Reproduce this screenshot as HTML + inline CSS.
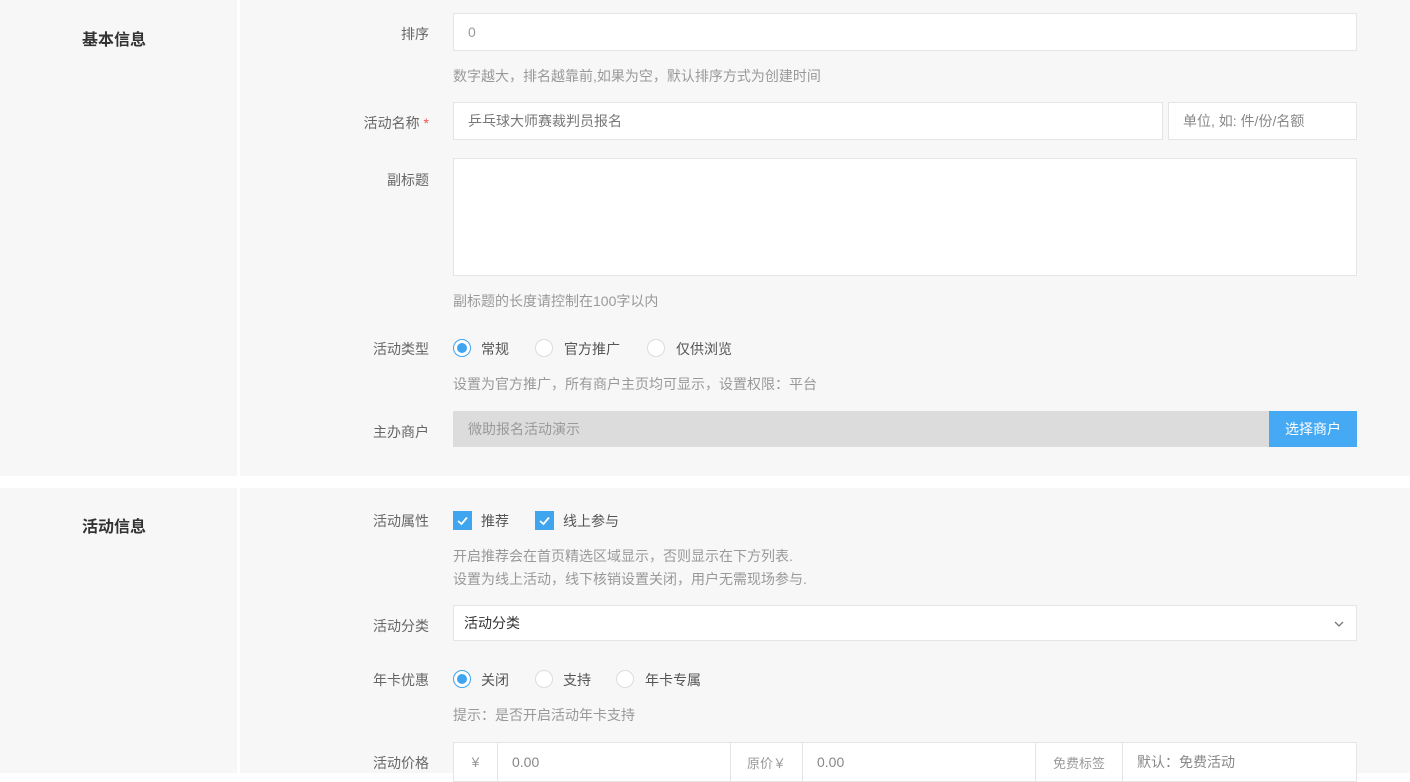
<!DOCTYPE html>
<html><head><meta charset="utf-8"><style>
*{box-sizing:border-box;margin:0;padding:0}
body{width:1410px;height:773px;background:#fff;font-family:"Liberation Sans","Noto Sans CJK SC",sans-serif;font-size:14px;color:#666;position:relative;overflow:hidden}
.sec{position:absolute;left:0;width:1410px;background:#f7f7f7}
.left{position:absolute;left:0;top:0;bottom:0;width:240px;border-right:3px solid #fff}
.title{position:absolute;left:82px;font-size:16px;font-weight:bold;color:#333}
.a{position:absolute;white-space:nowrap}
.lbl{position:absolute;right:981px;text-align:right;white-space:nowrap;color:#666}
.inp{position:absolute;background:#fff;border:1px solid #e5e5e5;color:#555;padding-left:14px;display:flex;align-items:center;font-size:14px}
.help{position:absolute;left:453px;color:#999;white-space:nowrap}
.radio{position:absolute;width:18px;height:18px;border-radius:50%;border:1px solid #ddd;background:#fff}
.radio.on{border:1px solid #3fa5ef}
.radio.on::after{content:"";position:absolute;left:3px;top:3px;width:10px;height:10px;border-radius:50%;background:#3fa5ef}
.cb{position:absolute;width:19px;height:19px;background:#3fa5ef}
.seg{position:absolute;top:0;height:100%;display:flex;align-items:center;border-right:1px solid #e5e5e5}
</style></head><body>
<div class="sec" style="top:0;height:476px">
 <div class="left"></div>
 <div class="title" style="top:26px">基本信息</div>
 <div class="lbl" style="top:24px">排序</div>
 <div class="inp" style="left:453px;top:13px;width:904px;height:38px;color:#999">0</div>
 <div class="help" style="top:66px">数字越大，排名越靠前,如果为空，默认排序方式为创建时间</div>
 <div class="lbl" style="top:113px">活动名称 <span style="color:#e55">*</span></div>
 <div style="position:absolute;left:429px"></div>
 <div class="inp" style="left:453px;top:102px;width:710px;height:38px;color:#777">乒乓球大师赛裁判员报名</div>
 <div class="inp" style="left:1168px;top:102px;width:189px;height:38px;color:#888">单位, 如: 件/份/名额</div>
 <div class="lbl" style="top:170px">副标题</div>
 <div class="inp" style="left:453px;top:158px;width:904px;height:118px"></div>
 <div class="help" style="top:291px">副标题的长度请控制在100字以内</div>
 <div class="lbl" style="top:339px">活动类型</div>
 <div class="radio on" style="left:453px;top:339px"></div><div class="a" style="left:481px;top:339px;color:#555">常规</div>
 <div class="radio" style="left:535px;top:339px"></div><div class="a" style="left:564px;top:339px;color:#555">官方推广</div>
 <div class="radio" style="left:647px;top:339px"></div><div class="a" style="left:676px;top:339px;color:#555">仅供浏览</div>
 <div class="help" style="top:374px">设置为官方推广，所有商户主页均可显示，设置权限：平台</div>
 <div class="lbl" style="top:422px">主办商户</div>
 <div class="inp" style="left:453px;top:411px;width:817px;height:36px;background:#dcdcdc;border-color:#dcdcdc;color:#999">微助报名活动演示</div>
 <div class="a" style="left:1269px;top:411px;width:88px;height:36px;background:#45a9f3;color:#fff;display:flex;align-items:center;justify-content:center">选择商户</div>
</div>
<div class="sec" style="top:488px;height:285px">
 <div class="left"></div>
 <div class="title" style="top:25px">活动信息</div>
 <div class="lbl" style="top:23px">活动属性</div>
 <div class="cb" style="left:453px;top:23px"><svg width="19" height="19"><path d="M5 10 L8.5 13 L14 6.5" stroke="#fff" stroke-width="1.8" fill="none"/></svg></div>
 <div class="a" style="left:481px;top:23px;color:#555">推荐</div>
 <div class="cb" style="left:535px;top:23px"><svg width="19" height="19"><path d="M5 10 L8.5 13 L14 6.5" stroke="#fff" stroke-width="1.8" fill="none"/></svg></div>
 <div class="a" style="left:563px;top:23px;color:#555">线上参与</div>
 <div class="help" style="top:58px">开启推荐会在首页精选区域显示，否则显示在下方列表.</div>
 <div class="help" style="top:81px">设置为线上活动，线下核销设置关闭，用户无需现场参与.</div>
 <div class="lbl" style="top:128px">活动分类</div>
 <div class="inp" style="left:453px;top:117px;width:904px;height:36px;padding-left:10px;color:#333">活动分类<svg style="position:absolute;right:12px;top:14px" width="10" height="8"><path d="M1 2 L5 6 L9 2" stroke="#777" stroke-width="1.3" fill="none"/></svg></div>
 <div class="lbl" style="top:182px">年卡优惠</div>
 <div class="radio on" style="left:453px;top:182px"></div><div class="a" style="left:481px;top:182px;color:#555">关闭</div>
 <div class="radio" style="left:535px;top:182px"></div><div class="a" style="left:563px;top:182px;color:#555">支持</div>
 <div class="radio" style="left:616px;top:182px"></div><div class="a" style="left:645px;top:182px;color:#555">年卡专属</div>
 <div class="help" style="top:217px">提示：是否开启活动年卡支持</div>
 <div class="lbl" style="top:265px">活动价格</div>
 <div class="a" style="left:453px;top:254px;width:904px;height:40px;background:#fff;border:1px solid #e5e5e5">
  <div class="seg" style="left:0;width:44px;justify-content:center;color:#999">¥</div>
  <div class="seg" style="left:44px;width:233px;padding-left:14px;color:#888">0.00</div>
  <div class="seg" style="left:277px;width:72px;justify-content:center;color:#999;font-size:13px">原价￥</div>
  <div class="seg" style="left:349px;width:233px;padding-left:14px;color:#888">0.00</div>
  <div class="seg" style="left:582px;width:87px;justify-content:center;color:#999;font-size:13px">免费标签</div>
  <div class="seg" style="left:669px;width:233px;padding-left:14px;color:#888;border:none">默认：免费活动</div>
 </div>
</div>
</body></html>
